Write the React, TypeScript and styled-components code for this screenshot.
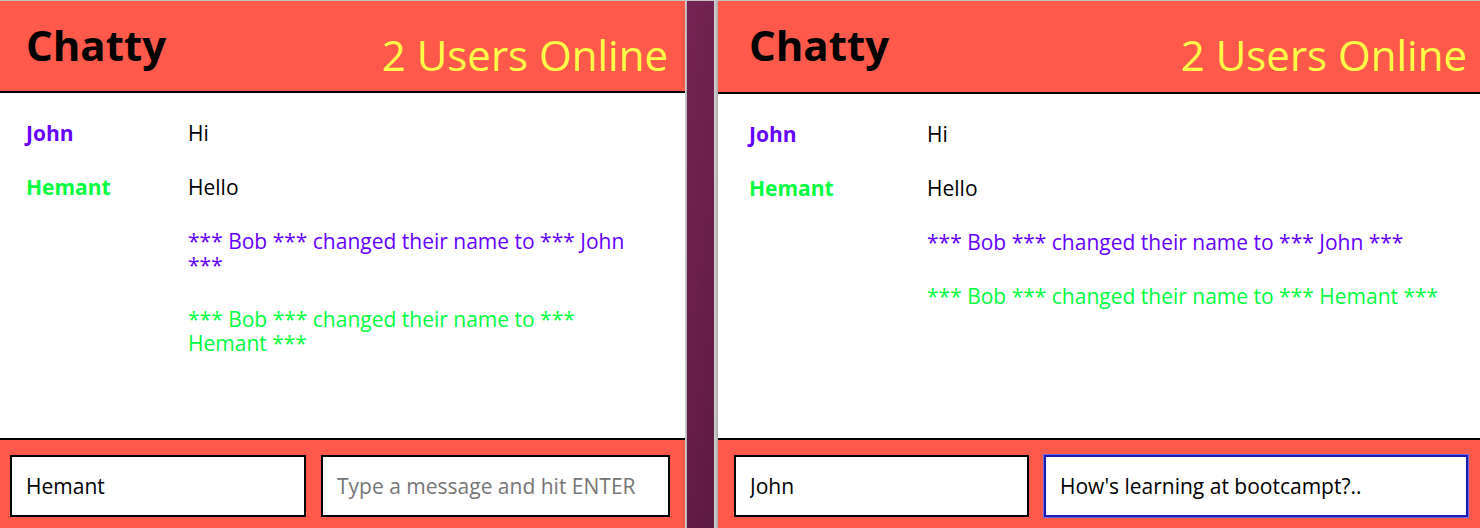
import React from "react";
import styled, { createGlobalStyle } from "styled-components";

const GlobalStyle = createGlobalStyle`
  html, body {
    margin: 0;
    padding: 0;
    background: #ffffff;
    overflow: hidden;
  }
  * { box-sizing: border-box; }
`;

const CORAL = "#ff594b";

const Screen = styled.div`
  width: 1480px;
  height: 528px;
  display: flex;
  flex-direction: column;
  font-family: "Open Sans", "DejaVu Sans", sans-serif;
  overflow: hidden;
`;

const TopLine = styled.div`
  height: 1px;
  background: #c4c4c4;
  flex: none;
`;

const Desktop = styled.div`
  flex: 1;
  display: flex;
  min-height: 0;
`;

const Divider = styled.div`
  flex: none;
  width: 33px;
  display: flex;
`;

const DividerEdge = styled.div<{ $w: number }>`
  width: ${(p) => p.$w}px;
  background: linear-gradient(90deg, #d6d6d6, #a9a9a9);
`;

const DividerBody = styled.div`
  flex: 1;
  background: linear-gradient(100deg, #742452 0%, #6b1f4b 50%, #5c1a40 100%);
`;

const Window = styled.div<{ $w: number }>`
  flex: none;
  width: ${(p) => p.$w}px;
  display: flex;
  flex-direction: column;
  background: #ffffff;
`;

const Header = styled.header<{ $h: number; $pl: number; $pr: number }>`
  flex: none;
  height: ${(p) => p.$h}px;
  background: ${CORAL};
  border-bottom: 2px solid #000000;
  display: flex;
  justify-content: space-between;
  align-items: flex-start;
  padding: 0 ${(p) => p.$pr}px 0 ${(p) => p.$pl}px;
`;

const Brand = styled.h1`
  margin: 0;
  padding-top: 15px;
  font-size: 42px;
  font-weight: 700;
  line-height: normal;
  color: #000000;
`;

const Online = styled.span`
  padding-top: 25px;
  font-size: 42px;
  font-weight: 400;
  line-height: normal;
  color: #ffff47;
`;

const Messages = styled.main<{ $pl: number }>`
  flex: 1;
  min-height: 0;
  display: flex;
  flex-direction: column;
  gap: 30px;
  padding: 28px 20px 0 ${(p) => p.$pl}px;
`;

const MessageRow = styled.div`
  display: flex;
  align-items: flex-start;
  font-size: 21px;
  line-height: 24px;
`;

const Username = styled.span<{ $w: number; $color: string }>`
  flex: none;
  width: ${(p) => p.$w}px;
  font-weight: 700;
  color: ${(p) => p.$color};
`;

const Content = styled.span<{ $color: string; $max: number }>`
  max-width: ${(p) => p.$max}px;
  color: ${(p) => p.$color};
`;

const Footer = styled.footer<{ $pl: number; $pr: number }>`
  flex: none;
  height: 90px;
  background: ${CORAL};
  border-top: 2px solid #000000;
  display: flex;
  gap: 15px;
  padding: 15px ${(p) => p.$pr}px 0 ${(p) => p.$pl}px;
`;

const Field = styled.input<{ $w?: number; $focused?: boolean }>`
  ${(p) => (p.$w ? `width: ${p.$w}px; flex: none;` : "flex: 1; min-width: 0;")}
  height: 62px;
  margin: 0;
  border: 2px solid ${(p) => (p.$focused ? "#1c1cb4" : "#000000")};
  ${(p) => (p.$focused ? "box-shadow: 0 0 0 1px #6a6ae6;" : "")}
  border-radius: 0;
  background: #ffffff;
  padding: 0 14px;
  font-family: "Open Sans", "DejaVu Sans", sans-serif;
  font-size: 21px;
  color: #000000;
  outline: none;
  &::placeholder {
    color: #767676;
  }
`;

const PURPLE = "#6600ff";
const GREEN = "#00ff40";

type Msg = { user?: string; color: string; text: string; textColor: string };

const messages: Msg[] = [
  { user: "John", color: PURPLE, text: "Hi", textColor: "#000000" },
  { user: "Hemant", color: GREEN, text: "Hello", textColor: "#000000" },
  { color: PURPLE, text: "*** Bob *** changed their name to *** John ***", textColor: PURPLE },
  { color: GREEN, text: "*** Bob *** changed their name to *** Hemant ***", textColor: GREEN },
];

type WinProps = {
  width: number;
  headerH: number;
  headL: number;
  padL: number;
  padR: number;
  nameW: number;
  contentMax: number;
  footL: number;
  footR: number;
  nameFieldW: number;
  name: string;
  draft: string;
};

function ChatWindow(p: WinProps) {
  return (
    <Window $w={p.width}>
      <Header $h={p.headerH} $pl={p.headL} $pr={p.padR}>
        <Brand>Chatty</Brand>
        <Online>2 Users Online</Online>
      </Header>
      <Messages $pl={p.padL}>
        {messages.map((m, i) => (
          <MessageRow key={i}>
            <Username $w={p.nameW} $color={m.color}>
              {m.user ?? ""}
            </Username>
            <Content $color={m.textColor} $max={p.contentMax}>
              {m.text}
            </Content>
          </MessageRow>
        ))}
      </Messages>
      <Footer $pl={p.footL} $pr={p.footR}>
        <Field $w={p.nameFieldW} defaultValue={p.name} />
        <Field
          $focused={!!p.draft}
          defaultValue={p.draft}
          placeholder="Type a message and hit ENTER"
        />
      </Footer>
    </Window>
  );
}

export default function App() {
  return (
    <>
      <GlobalStyle />
      <Screen>
        <TopLine />
        <Desktop>
          <ChatWindow
            width={685}
            headerH={92}
            headL={26}
            padL={26}
            padR={17}
            nameW={162}
            contentMax={450}
            footL={10}
            footR={15}
            nameFieldW={296}
            name="Hemant"
            draft=""
          />
          <Divider>
            <DividerEdge $w={2} />
            <DividerBody />
            <DividerEdge $w={4} />
          </Divider>
          <ChatWindow
            width={762}
            headerH={93}
            headL={31}
            padL={31}
            padR={13}
            nameW={178}
            contentMax={540}
            footL={16}
            footR={12}
            nameFieldW={295}
            name="John"
            draft="How's learning at bootcampt?.."
          />
        </Desktop>
      </Screen>
    </>
  );
}
